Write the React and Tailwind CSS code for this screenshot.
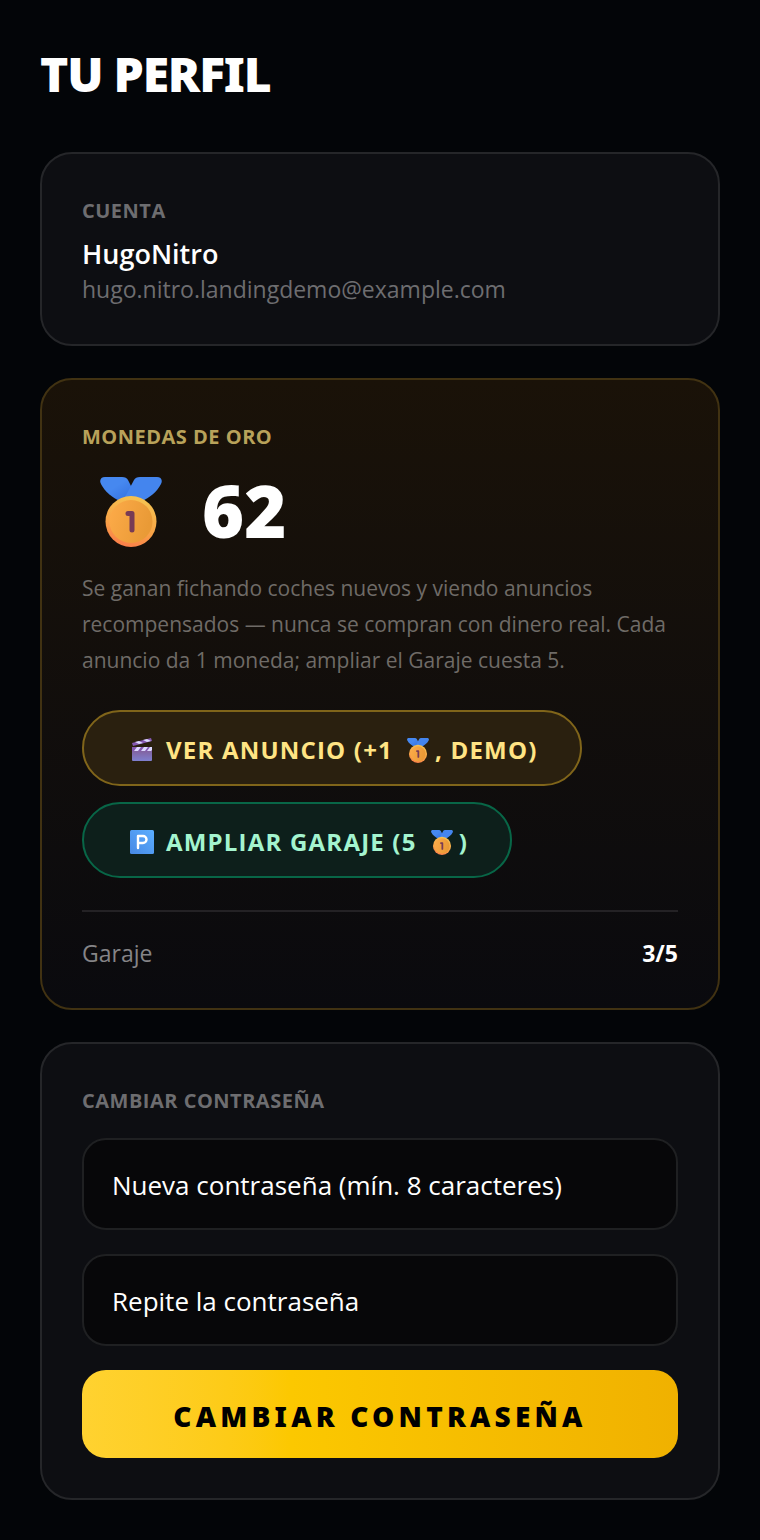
import React from "react";

function Medal({ className }) {
  return (
    <svg viewBox="0 -3 62 73" className={className} aria-hidden="true">
      <defs>
        <linearGradient id="ribbon" x1="0" y1="0" x2="1" y2="1">
          <stop offset="0.4" stopColor="#4688f0" />
          <stop offset="1" stopColor="#2f6bdc" />
        </linearGradient>
        <linearGradient id="rim" x1="0.7" y1="0" x2="0.4" y2="1">
          <stop offset="0" stopColor="#f6c552" />
          <stop offset="0.6" stopColor="#f8a446" />
          <stop offset="1" stopColor="#fb7f4a" />
        </linearGradient>
        <linearGradient id="face" x1="0" y1="0" x2="1" y2="0.3">
          <stop offset="0" stopColor="#fdab49" />
          <stop offset="1" stopColor="#e99a36" />
        </linearGradient>
      </defs>
      <path
        d="M5 0h17c3 0 5 1 6 3l9 18-16 4C12 20 5 15 1 7-1 3 1 0 5 0Z"
        fill="url(#ribbon)"
      />
      <path
        d="M57 0H40c-3 0-5 1-6 3l-9 17 16 5c9-5 16-10 20-18 2-4 0-7-4-7Z"
        fill="#4485ee"
      />
      <circle cx="31" cy="44.500" r="25.500" fill="url(#rim)" />
      <circle cx="31" cy="44.500" r="21.500" fill="url(#face)" />
      <path
        d="M28 36.500h4V53"
        fill="none"
        stroke="#773b55"
        strokeWidth="5"
        strokeLinecap="round"
        strokeLinejoin="round"
      />
    </svg>
  );
}

function Clapper({ className }) {
  return (
    <svg viewBox="-2 0 24 24" className={className} aria-hidden="true">
      <defs>
        <linearGradient id="board" x1="0" y1="0" x2="0" y2="1">
          <stop offset="0" stopColor="#835a93" />
          <stop offset="1" stopColor="#7f80cf" />
        </linearGradient>
      </defs>
      <path d="M0 10h20v12a1 1 0 0 1-1 1H1a1 1 0 0 1-1-1Z" fill="url(#board)" />
      <path d="M0 9h20v4H0Z" fill="#8458b0" />
      <path d="m5 9-3 4h4l3-4Zm7 0-3 4h4l3-4Zm6 0-3 4h4l1-1V9Z" fill="#ddd9ff" />
      <path d="M0 5 19 0l1 3L1 8Z" fill="#8458b0" />
      <path d="m3 4 4 2 4-1-4-2Zm8-2 4 2 4-1-4-2Z" fill="#ddd9ff" />
    </svg>
  );
}

function Parking({ className }) {
  return (
    <svg viewBox="0 0 24 24" className={className} aria-hidden="true">
      <defs>
        <linearGradient id="sign" x1="0" y1="1" x2="1" y2="0">
          <stop offset="0" stopColor="#4788e4" />
          <stop offset="1" stopColor="#5baeff" />
        </linearGradient>
      </defs>
      <rect width="24" height="24" rx="1.500" fill="url(#sign)" />
      <path
        d="M8 18V6h5a3.500 3.500 0 0 1 0 7H8"
        fill="none"
        stroke="#fff"
        strokeWidth="2.400"
        strokeLinecap="round"
        strokeLinejoin="round"
      />
    </svg>
  );
}

function Card({ className, children }) {
  return (
    <section
      className={`rounded-[32px] border-2 p-10 ${
        className || "border-[#252629] bg-[#0d0e12]"
      }`}
    >
      {children}
    </section>
  );
}

function Label({ className, children }) {
  return (
    <h2
      className={`text-[20px] leading-[34px] font-bold tracking-wide ${
        className || "text-[#6d6d70]"
      }`}
    >
      {children}
    </h2>
  );
}

const FIELDS = [
  { id: "new-password", text: "Nueva contraseña (mín. 8 caracteres)" },
  { id: "repeat-password", text: "Repite la contraseña" },
];

export default function App() {
  return (
    <main className="min-h-screen bg-[#030508] px-10 pt-10 pb-10 font-['Open_Sans','Noto_Sans',sans-serif] text-white">
      <h1 className="font-['Noto_Sans',sans-serif] text-[48px] leading-[68px] font-black tracking-tight">
        TU PERFIL
      </h1>

      <div className="mt-11 flex flex-col gap-8">
        <Card>
          <Label>CUENTA</Label>
          <p className="mt-1.5 text-[27px] leading-10 font-semibold">HugoNitro</p>
          <p className="text-[23px] leading-[30px] text-[#6d6d70]">
            hugo.nitro.landingdemo@example.com
          </p>
        </Card>

        <Card className="border-[#413212] bg-linear-to-b from-[#1a1208] to-[#0a0a0e]">
          <Label className="text-[#b8a25a]">MONEDAS DE ORO</Label>
          <div className="mt-4 flex h-20 items-center gap-10 pl-[18px]">
            <Medal className="h-[73px] w-[62px]" />
            <span className="font-['Noto_Sans',sans-serif] text-[72px] leading-[80px] font-black">
              62
            </span>
          </div>
          <p className="mt-5 text-[21px] leading-9 text-[#6f6b67]">
            Se ganan fichando coches nuevos y viendo anuncios recompensados —
            nunca se compran con dinero real. Cada anuncio da 1 moneda; ampliar
            el Garaje cuesta 5.
          </p>

          <div className="mt-8 flex flex-col items-start gap-4">
            <button
              type="button"
              className="flex h-[76px] items-center rounded-full border-2 border-[#80651a] bg-[#2a200f] pt-1 pr-[42px] pl-[46px] text-[24px] font-bold tracking-wider text-[#ffe484]"
            >
              <Clapper className="mr-3 size-6" />
              VER ANUNCIO (+1
              <Medal className="mr-1.5 ml-3.5 h-[26px] w-[22px]" />, DEMO)
            </button>
            <button
              type="button"
              className="flex h-[76px] items-center rounded-full border-2 border-[#086647] bg-[#0d1f1b] pt-1 pr-[42px] pl-[46px] text-[24px] font-bold tracking-wider text-[#a4f4cf]"
            >
              <Parking className="mr-3 size-6" />
              AMPLIAR GARAJE (5
              <Medal className="mr-1.5 ml-3.5 h-[26px] w-[22px]" />)
            </button>
          </div>

          <div className="mt-8 flex justify-between border-t-2 border-[#242225] pt-[26px] text-[23px] leading-[30px]">
            <span className="text-[#858487]">Garaje</span>
            <span className="font-bold">3/5</span>
          </div>
        </Card>

        <Card>
          <Label>CAMBIAR CONTRASEÑA</Label>
          <form className="mt-5 flex flex-col gap-6">
            {FIELDS.map((f) => (
              <input
                key={f.id}
                id={f.id}
                type="password"
                aria-label={f.text}
                placeholder={f.text}
                className="h-[92px] w-full rounded-3xl border-2 border-[#1f2022] bg-[#070709] px-7 pt-0.5 text-[26px] text-white placeholder:text-white"
              />
            ))}
            <button
              type="button"
              className="h-[88px] w-full rounded-3xl bg-linear-to-r from-[#ffd230] via-[#fcc800] via-35% to-[#f0b100] pt-1 font-['Noto_Sans',sans-serif] text-[28px] font-black tracking-[0.15em] text-black"
            >
              CAMBIAR CONTRASEÑA
            </button>
          </form>
        </Card>
      </div>
    </main>
  );
}
